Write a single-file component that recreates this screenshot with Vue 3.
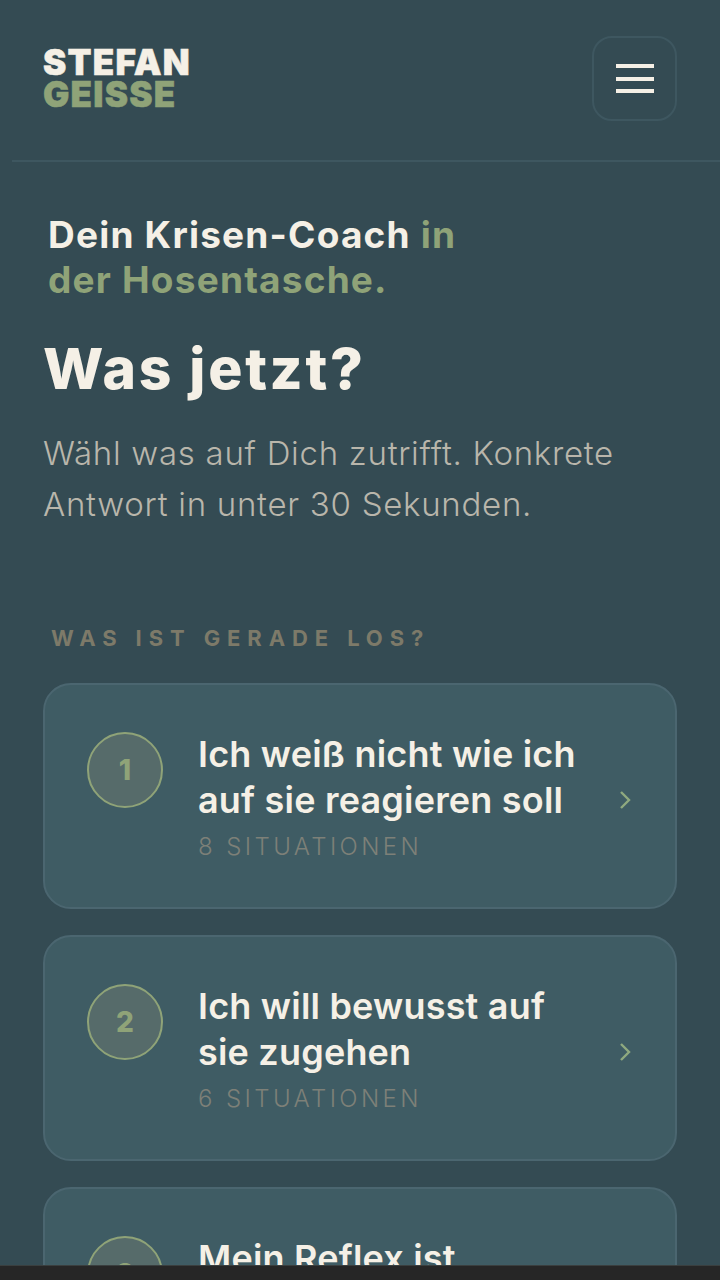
<template>
  <div class="page">
    <header class="top">
      <div class="logo">
        <span class="logo-a">STEFAN</span>
        <span class="logo-b">GEISSE</span>
      </div>
      <button class="menu" aria-label="Menü">
        <span class="bar"></span><span class="bar"></span><span class="bar"></span>
      </button>
    </header>

    <main class="content">
      <p class="tagline">Dein Krisen-Coach <em>in<br />der Hosentasche.</em></p>
      <h1 class="title">Was jetzt?</h1>
      <p class="lead">Wähl was auf Dich zutrifft. Konkrete<br />Antwort in unter 30 Sekunden.</p>
      <h2 class="label">WAS IST GERADE LOS?</h2>

      <div class="cards">
        <article v-for="c in cards" :key="c.n" class="card">
          <div class="num">{{ c.n }}</div>
          <div class="body">
            <div class="card-title">{{ c.l1 }}<template v-if="c.l2"><br />{{ c.l2 }}</template></div>
            <div v-if="c.meta" class="meta">{{ c.meta }}</div>
          </div>
          <svg class="chev" viewBox="0 0 12 20" width="12" height="20" fill="none">
            <path d="M2 2l8 8-8 8" stroke="#8fa97f" stroke-width="2.4" />
          </svg>
        </article>
      </div>
    </main>

    <div class="bottom"></div>
  </div>
</template>

<script setup>
const cards = [
  { n: 1, l1: 'Ich weiß nicht wie ich', l2: 'auf sie reagieren soll', meta: '8 SITUATIONEN' },
  { n: 2, l1: 'Ich will bewusst auf', l2: 'sie zugehen', meta: '6 SITUATIONEN' },
  { n: 3, l1: 'Mein Reflex ist' },
]
</script>

<style>
html, body { margin: 0; background: #344b53; }
</style>

<style scoped>
.page {
  position: relative;
  width: 720px;
  height: 1280px;
  overflow: hidden;
  background: #344b53;
  color: #f5f0e6;
  font-family: Inter, "Liberation Sans", sans-serif;
}
.top {
  display: flex;
  align-items: center;
  justify-content: space-between;
  height: 162px;
  margin-left: 12px;
  padding: 0 43px 0 31px;
  box-sizing: border-box;
  border-bottom: 2px solid #3e5760;
}
.logo {
  display: flex;
  flex-direction: column;
  font-weight: 900;
  font-size: 35px;
  line-height: 32px;
  letter-spacing: 1.2px;
  margin-top: -5px;
  -webkit-text-stroke: 0.5px currentColor;
}
.logo-a { color: #f5f0e6; }
.logo-b { color: #8fa378; }
.menu {
  width: 85px;
  height: 85px;
  box-sizing: border-box;
  padding: 0;
  margin-top: -3px;
  border: 2px solid #3e5760;
  border-radius: 20px;
  background: transparent;
  display: flex;
  flex-direction: column;
  align-items: center;
  justify-content: center;
  gap: 8.5px;
}
.bar { width: 38px; height: 4px; background: #f5f0e6; }
.content { padding: 50px 43px 0; }
.tagline {
  margin: 0 0 0 5px;
  font-size: 37px;
  line-height: 45px;
  font-weight: 700;
  letter-spacing: 1.2px;
  white-space: nowrap;
}
.tagline em { font-style: normal; color: #8fa378; }
.title {
  margin: 32px 0 0 0;
  font-size: 57px;
  line-height: 70px;
  font-weight: 800;
  letter-spacing: 2.7px;
}
.lead {
  margin: 24px 0 0;
  font-size: 33px;
  line-height: 51px;
  font-weight: 300;
  letter-spacing: 0.72px;
  color: #b9b6ab;
  white-space: nowrap;
}
.label {
  margin: 93px 0 0 8px;
  font-size: 22px;
  line-height: 30px;
  font-weight: 700;
  letter-spacing: 6.9px;
  color: #7d7a69;
}
.cards {
  margin-top: 30px;
  display: flex;
  flex-direction: column;
  gap: 26px;
}
.card {
  display: flex;
  align-items: flex-start;
  height: 226px;
  flex: none;
  box-sizing: border-box;
  padding: 47px 44px 0 42px;
  background: #3f5c64;
  border: 2px solid #4b6670;
  border-radius: 28px;
}
.num {
  flex: none;
  width: 76px;
  height: 76px;
  box-sizing: border-box;
  border: 2px solid #8fa378;
  border-radius: 50%;
  background: #566b6a;
  color: #8fa378;
  display: flex;
  align-items: center;
  justify-content: center;
  font-size: 28px;
  font-weight: 800;
}
.body {
  flex: 1;
  min-width: 0;
  margin-left: 35px;
}
.card-title {
  font-size: 36px;
  line-height: 46px;
  font-weight: 600;
  letter-spacing: 0.2px;
  margin-top: -1px;
  white-space: nowrap;
}
.meta {
  margin-top: 9px;
  font-size: 24px;
  line-height: 30px;
  font-weight: 300;
  letter-spacing: 3.4px;
  color: #7d8078;
}
.chev { flex: none; align-self: flex-start; margin-top: 58px; }
.bottom {
  position: absolute;
  left: 0;
  right: 0;
  bottom: 0;
  height: 15px;
  background: #262626;
  border-top: 1px solid #3a3f3f;
  box-sizing: border-box;
}
</style>
